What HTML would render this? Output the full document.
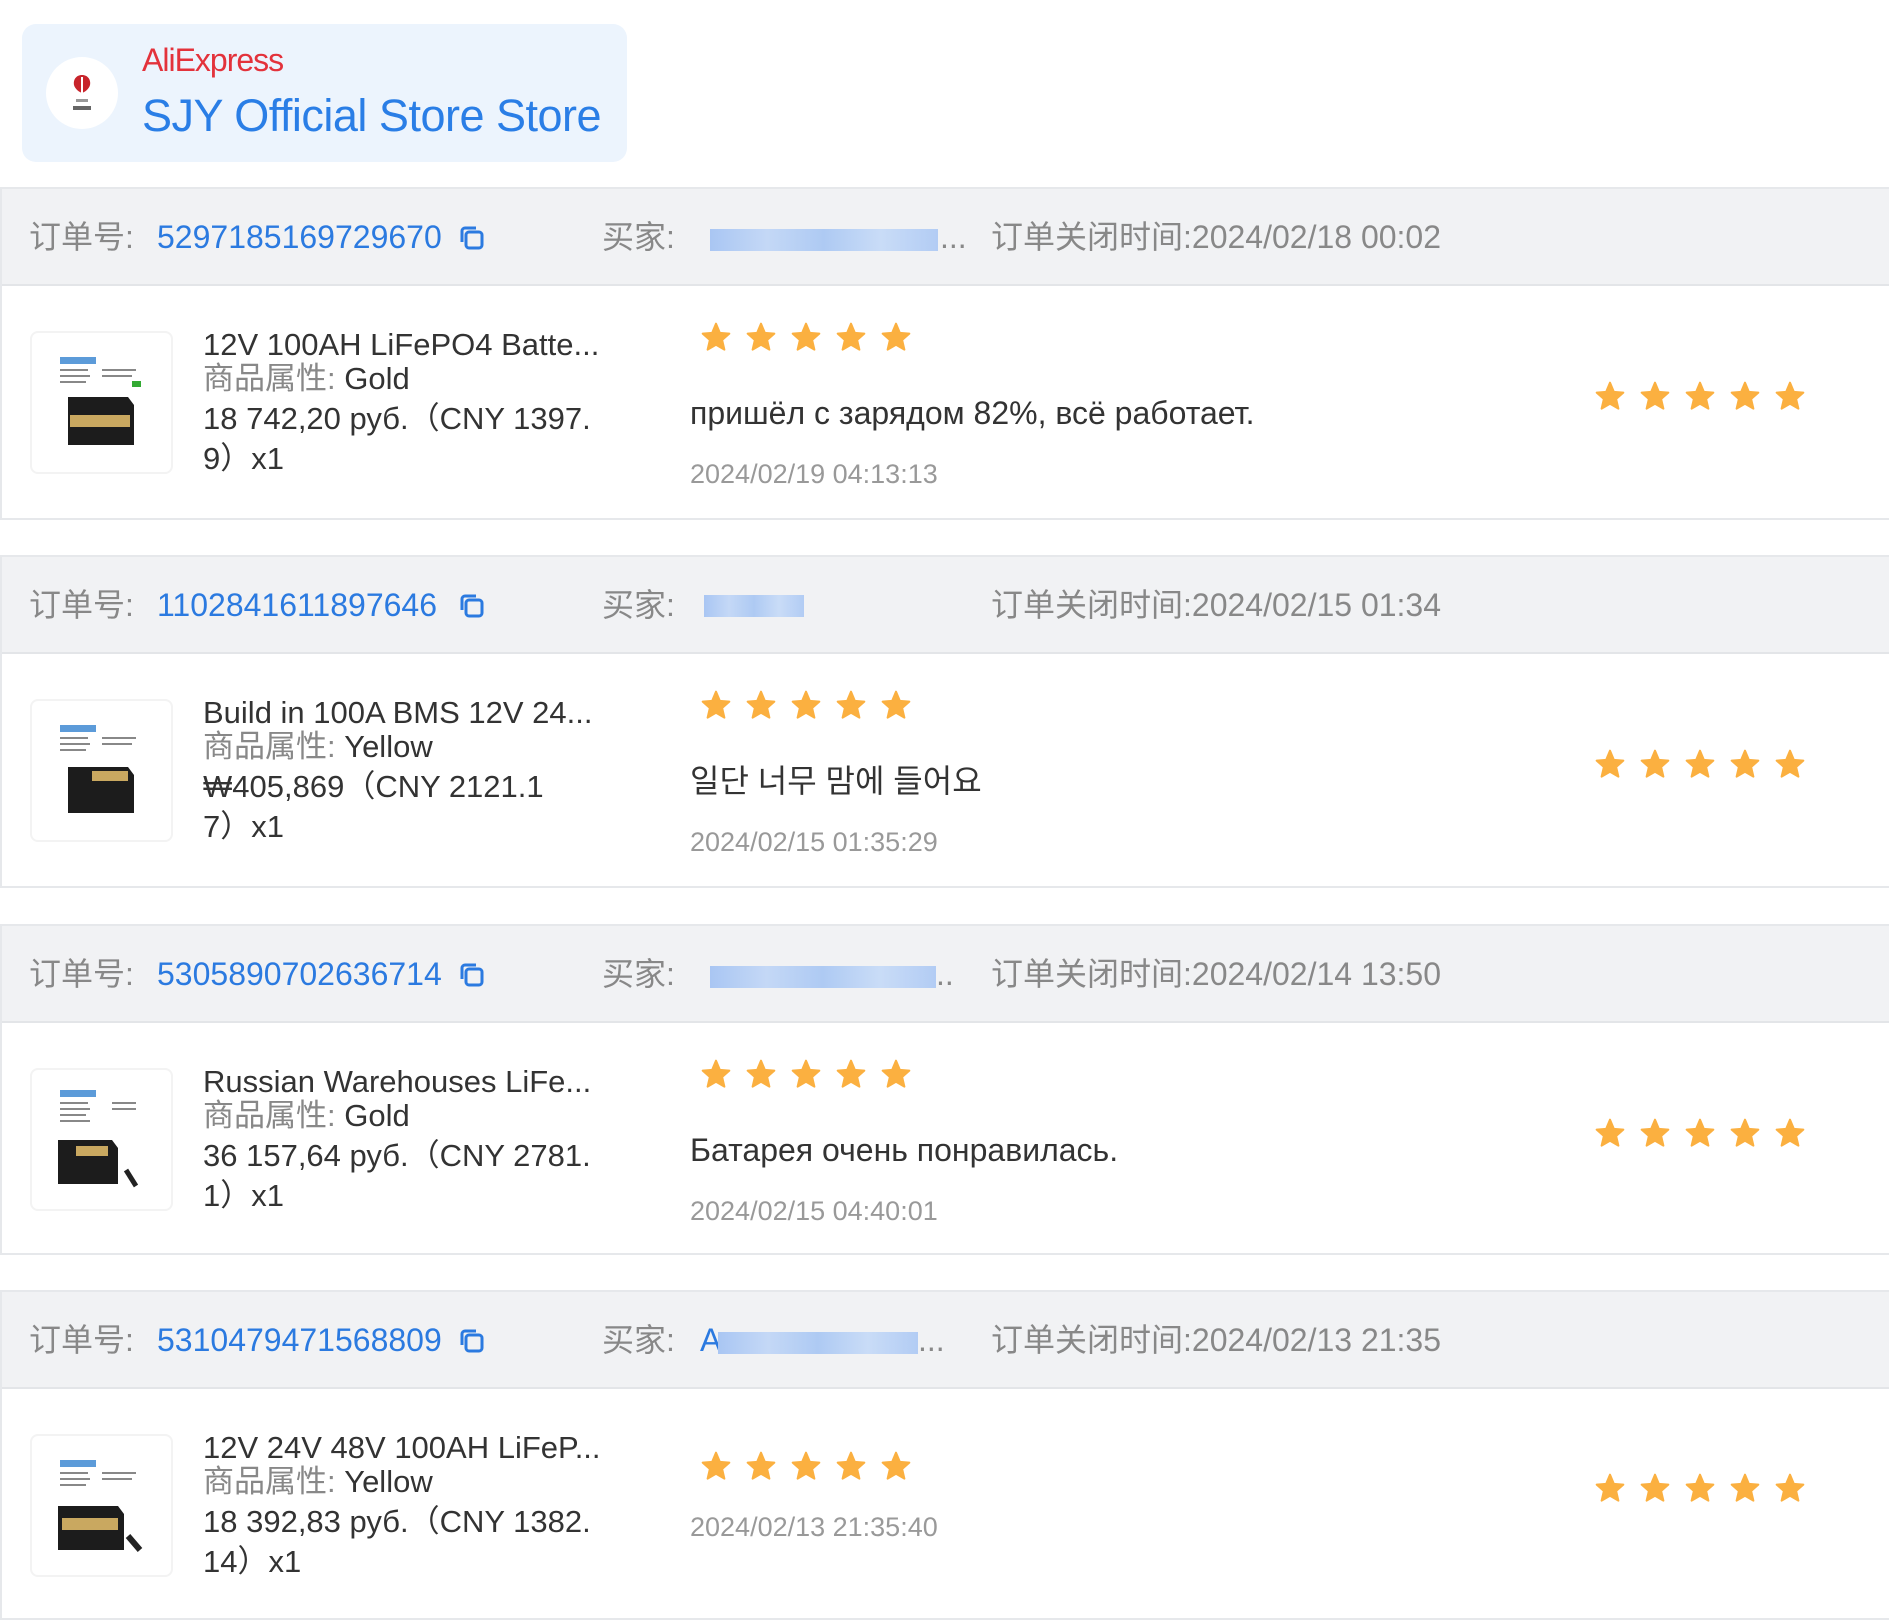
<!DOCTYPE html>
<html><head><meta charset="utf-8"><style>
*{margin:0;padding:0;box-sizing:border-box}
body{width:1889px;height:1598px;background:#fff;position:relative;overflow:hidden;font-family:"Liberation Sans","Noto Sans CJK SC",sans-serif;color:#333}
.abs{position:absolute;white-space:nowrap}
.card{left:22px;top:24px;width:605px;height:138px;background:#ecf4fd;border-radius:14px}
.logo{left:46px;top:57px;width:72px;height:72px;border-radius:50%;background:#fff}
.blk{position:absolute;left:0;width:1889px;border:2px solid #e6e8eb;border-right:none}
.hd{position:absolute;left:0;top:0;width:100%;height:97px;background:#f1f2f4;border-bottom:2px solid #e3e5e8}
.t{position:absolute;white-space:nowrap;line-height:1}
.g{color:#888}
.b{color:#2b7ae0}
.p{font-size:31px}
.img{position:absolute;left:28px;top:142px;width:143px;height:143px;border:2px solid #f3f3f3;border-radius:8px;background:#fff}
.stars{position:absolute;display:flex;gap:13px}
.stars svg{width:32px;height:32px}
.blur{position:absolute;height:22px;background:linear-gradient(90deg,#a9c6f3,#c4d8f6,#aecaf3,#c9dcf7,#b2ccf4);}
</style></head><body>
<div class="abs card"></div>
<div class="abs logo"><svg width="72" height="72" viewBox="0 0 72 72"><path d="M36 18c-6 0-9 5-8 10 1 4 5 7 8 8 3-1 7-4 8-8 1-5-2-10-8-10z" fill="#c8242b"/><path d="M36 20v16" stroke="#fff" stroke-width="2"/><rect x="30" y="42" width="12" height="3" fill="#999"/><rect x="27" y="49" width="18" height="4" fill="#666"/></svg></div>
<div class="t" style="left:142px;top:44px;font-size:32px;color:#e3323b;letter-spacing:-1px">AliExpress</div>
<div class="t" style="left:142px;top:93px;font-size:45px;color:#2a7ee6;letter-spacing:-0.5px">SJY Official Store Store</div>

<div class="blk" style="top:187px;height:333px">
 <div class="hd"></div>
 <div class="t g" style="left:27px;top:32px;font-size:32px">订单号:</div>
 <div class="t b" style="left:155px;top:32px;font-size:32px">5297185169729670</div>
 <svg class="abs" style="left:456px;top:35px" width="28" height="28" viewBox="0 0 28 28"><rect x="8" y="8" width="16" height="16" rx="3" fill="none" stroke="#2b7ae0" stroke-width="3"/><path d="M4 18V7a3 3 0 0 1 3-3h11" fill="none" stroke="#2b7ae0" stroke-width="3"/></svg>
 <div class="t g" style="left:600px;top:32px;font-size:32px">买家:</div>
 <div class="blur" style="left:708px;top:40px;width:228px"></div>
 <div class="t g" style="left:938px;top:32px;font-size:32px">...</div>
 <div class="t g" style="left:989px;top:32px;font-size:32px">订单关闭时间:2024/02/18 00:02</div>
 <div class="img"><svg width="139" height="139" viewBox="0 0 139 139"><rect x="28" y="24" width="36" height="7" fill="#5c9bd9"/><g fill="#888"><rect x="28" y="36" width="28" height="2"/><rect x="28" y="42" width="30" height="2"/><rect x="28" y="48" width="26" height="2"/><rect x="70" y="36" width="34" height="2"/><rect x="70" y="42" width="30" height="2"/></g><rect x="100" y="48" width="9" height="6" fill="#3a3"/><path d="M36 64h60l6 8v40h-66z" fill="#1c1c1c"/><rect x="38" y="82" width="60" height="12" fill="#c9a860"/></svg></div>
 <div class="t p" style="left:201px;top:140px">12V 100AH LiFePO4 Batte...</div>
 <div class="t p" style="left:201px;top:174px"><span class="g">商品属性:</span> Gold</div>
 <div class="t p" style="left:201px;top:214px">18 742,20 руб.（CNY  1397.</div>
 <div class="t p" style="left:201px;top:254px">9）x1</div>
 <div class="stars" style="left:698px;top:132px"><svg viewBox="0 0 24 24"><path d="M12 2l2.9 6.9 7.1.6-5.4 4.7 1.7 7.3L12 17.8 5.7 21.5l1.7-7.3L2 9.5l7.1-.6z" fill="#fbb040" stroke="#fbb040" stroke-linejoin="round" stroke-width="1.5"/></svg><svg viewBox="0 0 24 24"><path d="M12 2l2.9 6.9 7.1.6-5.4 4.7 1.7 7.3L12 17.8 5.7 21.5l1.7-7.3L2 9.5l7.1-.6z" fill="#fbb040" stroke="#fbb040" stroke-linejoin="round" stroke-width="1.5"/></svg><svg viewBox="0 0 24 24"><path d="M12 2l2.9 6.9 7.1.6-5.4 4.7 1.7 7.3L12 17.8 5.7 21.5l1.7-7.3L2 9.5l7.1-.6z" fill="#fbb040" stroke="#fbb040" stroke-linejoin="round" stroke-width="1.5"/></svg><svg viewBox="0 0 24 24"><path d="M12 2l2.9 6.9 7.1.6-5.4 4.7 1.7 7.3L12 17.8 5.7 21.5l1.7-7.3L2 9.5l7.1-.6z" fill="#fbb040" stroke="#fbb040" stroke-linejoin="round" stroke-width="1.5"/></svg><svg viewBox="0 0 24 24"><path d="M12 2l2.9 6.9 7.1.6-5.4 4.7 1.7 7.3L12 17.8 5.7 21.5l1.7-7.3L2 9.5l7.1-.6z" fill="#fbb040" stroke="#fbb040" stroke-linejoin="round" stroke-width="1.5"/></svg></div>
 <div class="t" style="left:688px;top:208px;font-size:32px">пришёл с зарядом 82%, всё работает.</div>
 <div class="t" style="left:688px;top:272px;font-size:27px;color:#999">2024/02/19 04:13:13</div>
 <div class="stars" style="left:1592px;top:191px"><svg viewBox="0 0 24 24"><path d="M12 2l2.9 6.9 7.1.6-5.4 4.7 1.7 7.3L12 17.8 5.7 21.5l1.7-7.3L2 9.5l7.1-.6z" fill="#fbb040" stroke="#fbb040" stroke-linejoin="round" stroke-width="1.5"/></svg><svg viewBox="0 0 24 24"><path d="M12 2l2.9 6.9 7.1.6-5.4 4.7 1.7 7.3L12 17.8 5.7 21.5l1.7-7.3L2 9.5l7.1-.6z" fill="#fbb040" stroke="#fbb040" stroke-linejoin="round" stroke-width="1.5"/></svg><svg viewBox="0 0 24 24"><path d="M12 2l2.9 6.9 7.1.6-5.4 4.7 1.7 7.3L12 17.8 5.7 21.5l1.7-7.3L2 9.5l7.1-.6z" fill="#fbb040" stroke="#fbb040" stroke-linejoin="round" stroke-width="1.5"/></svg><svg viewBox="0 0 24 24"><path d="M12 2l2.9 6.9 7.1.6-5.4 4.7 1.7 7.3L12 17.8 5.7 21.5l1.7-7.3L2 9.5l7.1-.6z" fill="#fbb040" stroke="#fbb040" stroke-linejoin="round" stroke-width="1.5"/></svg><svg viewBox="0 0 24 24"><path d="M12 2l2.9 6.9 7.1.6-5.4 4.7 1.7 7.3L12 17.8 5.7 21.5l1.7-7.3L2 9.5l7.1-.6z" fill="#fbb040" stroke="#fbb040" stroke-linejoin="round" stroke-width="1.5"/></svg></div>
</div>

<div class="blk" style="top:555px;height:333px">
 <div class="hd"></div>
 <div class="t g" style="left:27px;top:32px;font-size:32px">订单号:</div>
 <div class="t b" style="left:155px;top:32px;font-size:32px">1102841611897646</div>
 <svg class="abs" style="left:456px;top:35px" width="28" height="28" viewBox="0 0 28 28"><rect x="8" y="8" width="16" height="16" rx="3" fill="none" stroke="#2b7ae0" stroke-width="3"/><path d="M4 18V7a3 3 0 0 1 3-3h11" fill="none" stroke="#2b7ae0" stroke-width="3"/></svg>
 <div class="t g" style="left:600px;top:32px;font-size:32px">买家:</div>
 <div class="blur" style="left:702px;top:38px;width:100px"></div>
 <div class="t g" style="left:989px;top:32px;font-size:32px">订单关闭时间:2024/02/15 01:34</div>
 <div class="img"><svg width="139" height="139" viewBox="0 0 139 139"><rect x="28" y="24" width="36" height="7" fill="#5c9bd9"/><g fill="#888"><rect x="28" y="36" width="28" height="2"/><rect x="28" y="42" width="30" height="2"/><rect x="28" y="48" width="26" height="2"/><rect x="70" y="36" width="34" height="2"/><rect x="70" y="42" width="30" height="2"/></g><path d="M36 66h60l6 8v38h-66z" fill="#1c1c1c"/><rect x="60" y="70" width="36" height="10" fill="#c9a860"/></svg></div>
 <div class="t p" style="left:201px;top:140px">Build in 100A BMS 12V 24...</div>
 <div class="t p" style="left:201px;top:174px"><span class="g">商品属性:</span> Yellow</div>
 <div class="t p" style="left:201px;top:214px">₩405,869（CNY  2121.1</div>
 <div class="t p" style="left:201px;top:254px">7）x1</div>
 <div class="stars" style="left:698px;top:132px"><svg viewBox="0 0 24 24"><path d="M12 2l2.9 6.9 7.1.6-5.4 4.7 1.7 7.3L12 17.8 5.7 21.5l1.7-7.3L2 9.5l7.1-.6z" fill="#fbb040" stroke="#fbb040" stroke-linejoin="round" stroke-width="1.5"/></svg><svg viewBox="0 0 24 24"><path d="M12 2l2.9 6.9 7.1.6-5.4 4.7 1.7 7.3L12 17.8 5.7 21.5l1.7-7.3L2 9.5l7.1-.6z" fill="#fbb040" stroke="#fbb040" stroke-linejoin="round" stroke-width="1.5"/></svg><svg viewBox="0 0 24 24"><path d="M12 2l2.9 6.9 7.1.6-5.4 4.7 1.7 7.3L12 17.8 5.7 21.5l1.7-7.3L2 9.5l7.1-.6z" fill="#fbb040" stroke="#fbb040" stroke-linejoin="round" stroke-width="1.5"/></svg><svg viewBox="0 0 24 24"><path d="M12 2l2.9 6.9 7.1.6-5.4 4.7 1.7 7.3L12 17.8 5.7 21.5l1.7-7.3L2 9.5l7.1-.6z" fill="#fbb040" stroke="#fbb040" stroke-linejoin="round" stroke-width="1.5"/></svg><svg viewBox="0 0 24 24"><path d="M12 2l2.9 6.9 7.1.6-5.4 4.7 1.7 7.3L12 17.8 5.7 21.5l1.7-7.3L2 9.5l7.1-.6z" fill="#fbb040" stroke="#fbb040" stroke-linejoin="round" stroke-width="1.5"/></svg></div>
 <div class="t" style="left:688px;top:208px;font-size:32px;font-family:'Liberation Sans','Noto Sans CJK KR',sans-serif">일단 너무 맘에 들어요</div>
 <div class="t" style="left:688px;top:272px;font-size:27px;color:#999">2024/02/15 01:35:29</div>
 <div class="stars" style="left:1592px;top:191px"><svg viewBox="0 0 24 24"><path d="M12 2l2.9 6.9 7.1.6-5.4 4.7 1.7 7.3L12 17.8 5.7 21.5l1.7-7.3L2 9.5l7.1-.6z" fill="#fbb040" stroke="#fbb040" stroke-linejoin="round" stroke-width="1.5"/></svg><svg viewBox="0 0 24 24"><path d="M12 2l2.9 6.9 7.1.6-5.4 4.7 1.7 7.3L12 17.8 5.7 21.5l1.7-7.3L2 9.5l7.1-.6z" fill="#fbb040" stroke="#fbb040" stroke-linejoin="round" stroke-width="1.5"/></svg><svg viewBox="0 0 24 24"><path d="M12 2l2.9 6.9 7.1.6-5.4 4.7 1.7 7.3L12 17.8 5.7 21.5l1.7-7.3L2 9.5l7.1-.6z" fill="#fbb040" stroke="#fbb040" stroke-linejoin="round" stroke-width="1.5"/></svg><svg viewBox="0 0 24 24"><path d="M12 2l2.9 6.9 7.1.6-5.4 4.7 1.7 7.3L12 17.8 5.7 21.5l1.7-7.3L2 9.5l7.1-.6z" fill="#fbb040" stroke="#fbb040" stroke-linejoin="round" stroke-width="1.5"/></svg><svg viewBox="0 0 24 24"><path d="M12 2l2.9 6.9 7.1.6-5.4 4.7 1.7 7.3L12 17.8 5.7 21.5l1.7-7.3L2 9.5l7.1-.6z" fill="#fbb040" stroke="#fbb040" stroke-linejoin="round" stroke-width="1.5"/></svg></div>
</div>

<div class="blk" style="top:924px;height:331px">
 <div class="hd"></div>
 <div class="t g" style="left:27px;top:32px;font-size:32px">订单号:</div>
 <div class="t b" style="left:155px;top:32px;font-size:32px">5305890702636714</div>
 <svg class="abs" style="left:456px;top:35px" width="28" height="28" viewBox="0 0 28 28"><rect x="8" y="8" width="16" height="16" rx="3" fill="none" stroke="#2b7ae0" stroke-width="3"/><path d="M4 18V7a3 3 0 0 1 3-3h11" fill="none" stroke="#2b7ae0" stroke-width="3"/></svg>
 <div class="t g" style="left:600px;top:32px;font-size:32px">买家:</div>
 <div class="blur" style="left:708px;top:40px;width:226px"></div>
 <div class="t g" style="left:934px;top:32px;font-size:32px">..</div>
 <div class="t g" style="left:989px;top:32px;font-size:32px">订单关闭时间:2024/02/14 13:50</div>
 <div class="img"><svg width="139" height="139" viewBox="0 0 139 139"><rect x="28" y="20" width="36" height="7" fill="#5c9bd9"/><g fill="#888"><rect x="28" y="32" width="28" height="2"/><rect x="28" y="38" width="30" height="2"/><rect x="28" y="44" width="26" height="2"/><rect x="28" y="50" width="30" height="2"/><rect x="80" y="32" width="24" height="2"/><rect x="80" y="38" width="24" height="2"/></g><path d="M26 70h54l6 8v36h-60z" fill="#1c1c1c"/><rect x="44" y="76" width="32" height="10" fill="#c9a860"/><path d="M94 100l10 16" stroke="#222" stroke-width="5"/></svg></div>
 <div class="t p" style="left:201px;top:140px">Russian Warehouses LiFe...</div>
 <div class="t p" style="left:201px;top:174px"><span class="g">商品属性:</span> Gold</div>
 <div class="t p" style="left:201px;top:214px">36 157,64 руб.（CNY  2781.</div>
 <div class="t p" style="left:201px;top:254px">1）x1</div>
 <div class="stars" style="left:698px;top:132px"><svg viewBox="0 0 24 24"><path d="M12 2l2.9 6.9 7.1.6-5.4 4.7 1.7 7.3L12 17.8 5.7 21.5l1.7-7.3L2 9.5l7.1-.6z" fill="#fbb040" stroke="#fbb040" stroke-linejoin="round" stroke-width="1.5"/></svg><svg viewBox="0 0 24 24"><path d="M12 2l2.9 6.9 7.1.6-5.4 4.7 1.7 7.3L12 17.8 5.7 21.5l1.7-7.3L2 9.5l7.1-.6z" fill="#fbb040" stroke="#fbb040" stroke-linejoin="round" stroke-width="1.5"/></svg><svg viewBox="0 0 24 24"><path d="M12 2l2.9 6.9 7.1.6-5.4 4.7 1.7 7.3L12 17.8 5.7 21.5l1.7-7.3L2 9.5l7.1-.6z" fill="#fbb040" stroke="#fbb040" stroke-linejoin="round" stroke-width="1.5"/></svg><svg viewBox="0 0 24 24"><path d="M12 2l2.9 6.9 7.1.6-5.4 4.7 1.7 7.3L12 17.8 5.7 21.5l1.7-7.3L2 9.5l7.1-.6z" fill="#fbb040" stroke="#fbb040" stroke-linejoin="round" stroke-width="1.5"/></svg><svg viewBox="0 0 24 24"><path d="M12 2l2.9 6.9 7.1.6-5.4 4.7 1.7 7.3L12 17.8 5.7 21.5l1.7-7.3L2 9.5l7.1-.6z" fill="#fbb040" stroke="#fbb040" stroke-linejoin="round" stroke-width="1.5"/></svg></div>
 <div class="t" style="left:688px;top:208px;font-size:32px">Батарея очень понравилась.</div>
 <div class="t" style="left:688px;top:272px;font-size:27px;color:#999">2024/02/15 04:40:01</div>
 <div class="stars" style="left:1592px;top:191px"><svg viewBox="0 0 24 24"><path d="M12 2l2.9 6.9 7.1.6-5.4 4.7 1.7 7.3L12 17.8 5.7 21.5l1.7-7.3L2 9.5l7.1-.6z" fill="#fbb040" stroke="#fbb040" stroke-linejoin="round" stroke-width="1.5"/></svg><svg viewBox="0 0 24 24"><path d="M12 2l2.9 6.9 7.1.6-5.4 4.7 1.7 7.3L12 17.8 5.7 21.5l1.7-7.3L2 9.5l7.1-.6z" fill="#fbb040" stroke="#fbb040" stroke-linejoin="round" stroke-width="1.5"/></svg><svg viewBox="0 0 24 24"><path d="M12 2l2.9 6.9 7.1.6-5.4 4.7 1.7 7.3L12 17.8 5.7 21.5l1.7-7.3L2 9.5l7.1-.6z" fill="#fbb040" stroke="#fbb040" stroke-linejoin="round" stroke-width="1.5"/></svg><svg viewBox="0 0 24 24"><path d="M12 2l2.9 6.9 7.1.6-5.4 4.7 1.7 7.3L12 17.8 5.7 21.5l1.7-7.3L2 9.5l7.1-.6z" fill="#fbb040" stroke="#fbb040" stroke-linejoin="round" stroke-width="1.5"/></svg><svg viewBox="0 0 24 24"><path d="M12 2l2.9 6.9 7.1.6-5.4 4.7 1.7 7.3L12 17.8 5.7 21.5l1.7-7.3L2 9.5l7.1-.6z" fill="#fbb040" stroke="#fbb040" stroke-linejoin="round" stroke-width="1.5"/></svg></div>
</div>

<div class="blk" style="top:1290px;height:330px">
 <div class="hd"></div>
 <div class="t g" style="left:27px;top:32px;font-size:32px">订单号:</div>
 <div class="t b" style="left:155px;top:32px;font-size:32px">5310479471568809</div>
 <svg class="abs" style="left:456px;top:35px" width="28" height="28" viewBox="0 0 28 28"><rect x="8" y="8" width="16" height="16" rx="3" fill="none" stroke="#2b7ae0" stroke-width="3"/><path d="M4 18V7a3 3 0 0 1 3-3h11" fill="none" stroke="#2b7ae0" stroke-width="3"/></svg>
 <div class="t g" style="left:600px;top:32px;font-size:32px">买家:</div>
 <div class="t b" style="left:698px;top:32px;font-size:32px">A</div>
 <div class="blur" style="left:716px;top:40px;width:200px"></div>
 <div class="t g" style="left:916px;top:32px;font-size:32px">...</div>
 <div class="t g" style="left:989px;top:32px;font-size:32px">订单关闭时间:2024/02/13 21:35</div>
 <div class="img"><svg width="139" height="139" viewBox="0 0 139 139"><rect x="28" y="24" width="36" height="7" fill="#5c9bd9"/><g fill="#888"><rect x="28" y="36" width="28" height="2"/><rect x="28" y="42" width="30" height="2"/><rect x="28" y="48" width="26" height="2"/><rect x="70" y="36" width="34" height="2"/><rect x="70" y="42" width="30" height="2"/></g><path d="M26 70h60l6 8v36h-66z" fill="#1c1c1c"/><rect x="30" y="82" width="56" height="12" fill="#c9a860"/><path d="M96 100l12 14" stroke="#222" stroke-width="6"/></svg></div>
 <div class="t p" style="left:201px;top:140px">12V 24V 48V 100AH LiFeP...</div>
 <div class="t p" style="left:201px;top:174px"><span class="g">商品属性:</span> Yellow</div>
 <div class="t p" style="left:201px;top:214px">18 392,83 руб.（CNY  1382.</div>
 <div class="t p" style="left:201px;top:254px">14）x1</div>
 <div class="stars" style="left:698px;top:158px"><svg viewBox="0 0 24 24"><path d="M12 2l2.9 6.9 7.1.6-5.4 4.7 1.7 7.3L12 17.8 5.7 21.5l1.7-7.3L2 9.5l7.1-.6z" fill="#fbb040" stroke="#fbb040" stroke-linejoin="round" stroke-width="1.5"/></svg><svg viewBox="0 0 24 24"><path d="M12 2l2.9 6.9 7.1.6-5.4 4.7 1.7 7.3L12 17.8 5.7 21.5l1.7-7.3L2 9.5l7.1-.6z" fill="#fbb040" stroke="#fbb040" stroke-linejoin="round" stroke-width="1.5"/></svg><svg viewBox="0 0 24 24"><path d="M12 2l2.9 6.9 7.1.6-5.4 4.7 1.7 7.3L12 17.8 5.7 21.5l1.7-7.3L2 9.5l7.1-.6z" fill="#fbb040" stroke="#fbb040" stroke-linejoin="round" stroke-width="1.5"/></svg><svg viewBox="0 0 24 24"><path d="M12 2l2.9 6.9 7.1.6-5.4 4.7 1.7 7.3L12 17.8 5.7 21.5l1.7-7.3L2 9.5l7.1-.6z" fill="#fbb040" stroke="#fbb040" stroke-linejoin="round" stroke-width="1.5"/></svg><svg viewBox="0 0 24 24"><path d="M12 2l2.9 6.9 7.1.6-5.4 4.7 1.7 7.3L12 17.8 5.7 21.5l1.7-7.3L2 9.5l7.1-.6z" fill="#fbb040" stroke="#fbb040" stroke-linejoin="round" stroke-width="1.5"/></svg></div>
 <div class="t" style="left:688px;top:222px;font-size:27px;color:#999">2024/02/13 21:35:40</div>
 <div class="stars" style="left:1592px;top:180px"><svg viewBox="0 0 24 24"><path d="M12 2l2.9 6.9 7.1.6-5.4 4.7 1.7 7.3L12 17.8 5.7 21.5l1.7-7.3L2 9.5l7.1-.6z" fill="#fbb040" stroke="#fbb040" stroke-linejoin="round" stroke-width="1.5"/></svg><svg viewBox="0 0 24 24"><path d="M12 2l2.9 6.9 7.1.6-5.4 4.7 1.7 7.3L12 17.8 5.7 21.5l1.7-7.3L2 9.5l7.1-.6z" fill="#fbb040" stroke="#fbb040" stroke-linejoin="round" stroke-width="1.5"/></svg><svg viewBox="0 0 24 24"><path d="M12 2l2.9 6.9 7.1.6-5.4 4.7 1.7 7.3L12 17.8 5.7 21.5l1.7-7.3L2 9.5l7.1-.6z" fill="#fbb040" stroke="#fbb040" stroke-linejoin="round" stroke-width="1.5"/></svg><svg viewBox="0 0 24 24"><path d="M12 2l2.9 6.9 7.1.6-5.4 4.7 1.7 7.3L12 17.8 5.7 21.5l1.7-7.3L2 9.5l7.1-.6z" fill="#fbb040" stroke="#fbb040" stroke-linejoin="round" stroke-width="1.5"/></svg><svg viewBox="0 0 24 24"><path d="M12 2l2.9 6.9 7.1.6-5.4 4.7 1.7 7.3L12 17.8 5.7 21.5l1.7-7.3L2 9.5l7.1-.6z" fill="#fbb040" stroke="#fbb040" stroke-linejoin="round" stroke-width="1.5"/></svg></div>
</div>
</body></html>
